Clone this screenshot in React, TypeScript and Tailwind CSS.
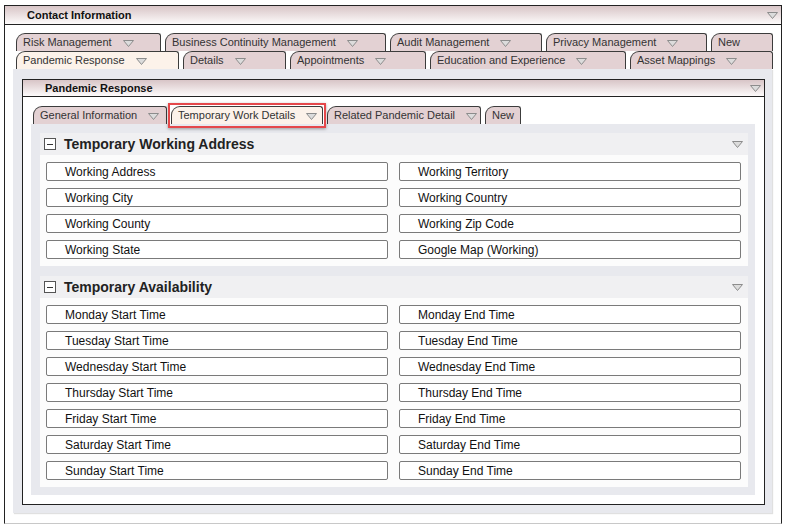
import React from 'react';

const Tri = ({ className = '' }: { className?: string }) => (
  <svg width="11" height="7" viewBox="0 0 11 7" className={className}>
    <polygon points="0.5,0.5 10.5,0.5 5.5,6.5" fill="#dcdcdc" stroke="#8c8c8c" strokeWidth="1" />
  </svg>
);

interface TabProps {
  label: string;
  width: number;
  active?: boolean;
  arrow?: boolean;
  highlight?: boolean;
}

function Tab({ label, width, active, arrow = true, highlight }: TabProps) {
  return (
    <div
      className={`relative flex h-[18px] shrink-0 items-center rounded-tl-[9px] rounded-tr-[3px] border border-b-0 border-[#3c3c3c] pl-[6px] text-[11px] leading-none text-[#333] ${
        active ? 'bg-[#fcf2ea]' : 'bg-[#e3d1d3]'
      }`}
      style={{ width }}
    >
      <span className="whitespace-nowrap">{label}</span>
      {arrow && <Tri className="ml-[11px] mt-[1px]" />}
      {highlight && (
        <div className="pointer-events-none absolute -left-[4px] -right-[4px] -top-[4px] -bottom-[4px] border-2 border-[#e5484b] shadow-[0_1px_3px_rgba(0,0,0,0.35)]" />
      )}
    </div>
  );
}

function Field({ label }: { label: string }) {
  return (
    <div className="flex h-[19px] items-center rounded-[2px] border border-[#7a7a7a] bg-white pl-[18px] text-[12px] text-[#111]">
      {label}
    </div>
  );
}

function Section({ title, fields }: { title: string; fields: string[] }) {
  return (
    <div>
      <div className="flex h-[22px] items-center bg-[#f0f0f2] pl-[4px] pr-[5px]">
        <div className="flex h-[12px] w-[12px] items-center justify-center border border-[#555] bg-white">
          <div className="h-[1px] w-[6px] bg-[#333]" />
        </div>
        <span className="ml-[8px] text-[14px] font-bold text-[#222]">{title}</span>
        <Tri className="ml-auto" />
      </div>
      <div className="grid grid-cols-2 gap-x-[11px] gap-y-[7px] bg-[#fcfcfc] pb-[7px] pl-[6px] pr-[7px] pt-[7px]">
        {fields.map((f) => (
          <Field key={f} label={f} />
        ))}
      </div>
    </div>
  );
}

const days = ['Monday', 'Tuesday', 'Wednesday', 'Thursday', 'Friday', 'Saturday', 'Sunday'];
const availability = days.flatMap((d) => [`${d} Start Time`, `${d} End Time`]);

export default function App() {
  return (
    <div className="min-h-[527px] bg-white pl-[4px] pt-[5px]" style={{ fontFamily: '"Liberation Sans", Arial, sans-serif' }}>
      <div className="w-[778px] border-x border-t border-[#222] border-b border-b-[#c8c8c8] bg-white pb-[10px]">
        {/* main header */}
        <div className="flex h-[19px] items-center border-b border-[#222] bg-gradient-to-b from-[#d8c5c7] to-[#fdfbfb] pl-[22px] pr-[3px]">
          <span className="text-[11px] font-bold text-[#111]">Contact Information</span>
          <Tri className="ml-auto" />
        </div>

        {/* outer tabs */}
        <div className="pl-[11px] pt-[8px]">
          <div className="flex gap-[4px]">
            <Tab label="Risk Management" width={145} />
            <Tab label="Business Continuity Management" width={221} />
            <Tab label="Audit Management" width={152} />
            <Tab label="Privacy Management" width={161} />
            <Tab label="New" width={62} arrow={false} />
          </div>
          <div className="flex gap-[4px]">
            <Tab label="Pandemic Response" width={163} active />
            <Tab label="Details" width={103} />
            <Tab label="Appointments" width={136} />
            <Tab label="Education and Experience" width={196} />
            <Tab label="Asset Mappings" width={143} />
          </div>
        </div>

        {/* outer panel */}
        <div className="ml-[8px] w-[759px] bg-[#e8e9ee] pb-[8px] pl-[9px] pr-[7px] pt-[10px] shadow-[1px_1px_1px_rgba(0,0,0,0.12)]">
          <div className="border border-[#222] bg-white pb-[9px]">
            <div className="flex h-[17px] items-center border-b border-[#222] bg-gradient-to-b from-[#d8c5c7] to-[#fdfbfb] pl-[22px] pr-[3px]">
              <span className="text-[11px] font-bold text-[#111]">Pandemic Response</span>
              <Tri className="ml-auto" />
            </div>

            <div className="flex gap-[4px] pl-[10px] pt-[9px]">
              <Tab label="General Information" width={134} />
              <Tab label="Temporary Work Details" width={152} active highlight />
              <Tab label="Related Pandemic Detail" width={154} />
              <Tab label="New" width={36} arrow={false} />
            </div>

            <div className="ml-[8px] w-[724px] bg-[#e8e9ee] pb-[8px] pl-[9px] pr-[7px] pt-[9px]">
              <Section
                title="Temporary Working Address"
                fields={[
                  'Working Address',
                  'Working Territory',
                  'Working City',
                  'Working Country',
                  'Working County',
                  'Working Zip Code',
                  'Working State',
                  'Google Map (Working)',
                ]}
              />
              <div className="h-[10px]" />
              <Section title="Temporary Availability" fields={availability} />
            </div>
          </div>
        </div>
      </div>
    </div>
  );
}
